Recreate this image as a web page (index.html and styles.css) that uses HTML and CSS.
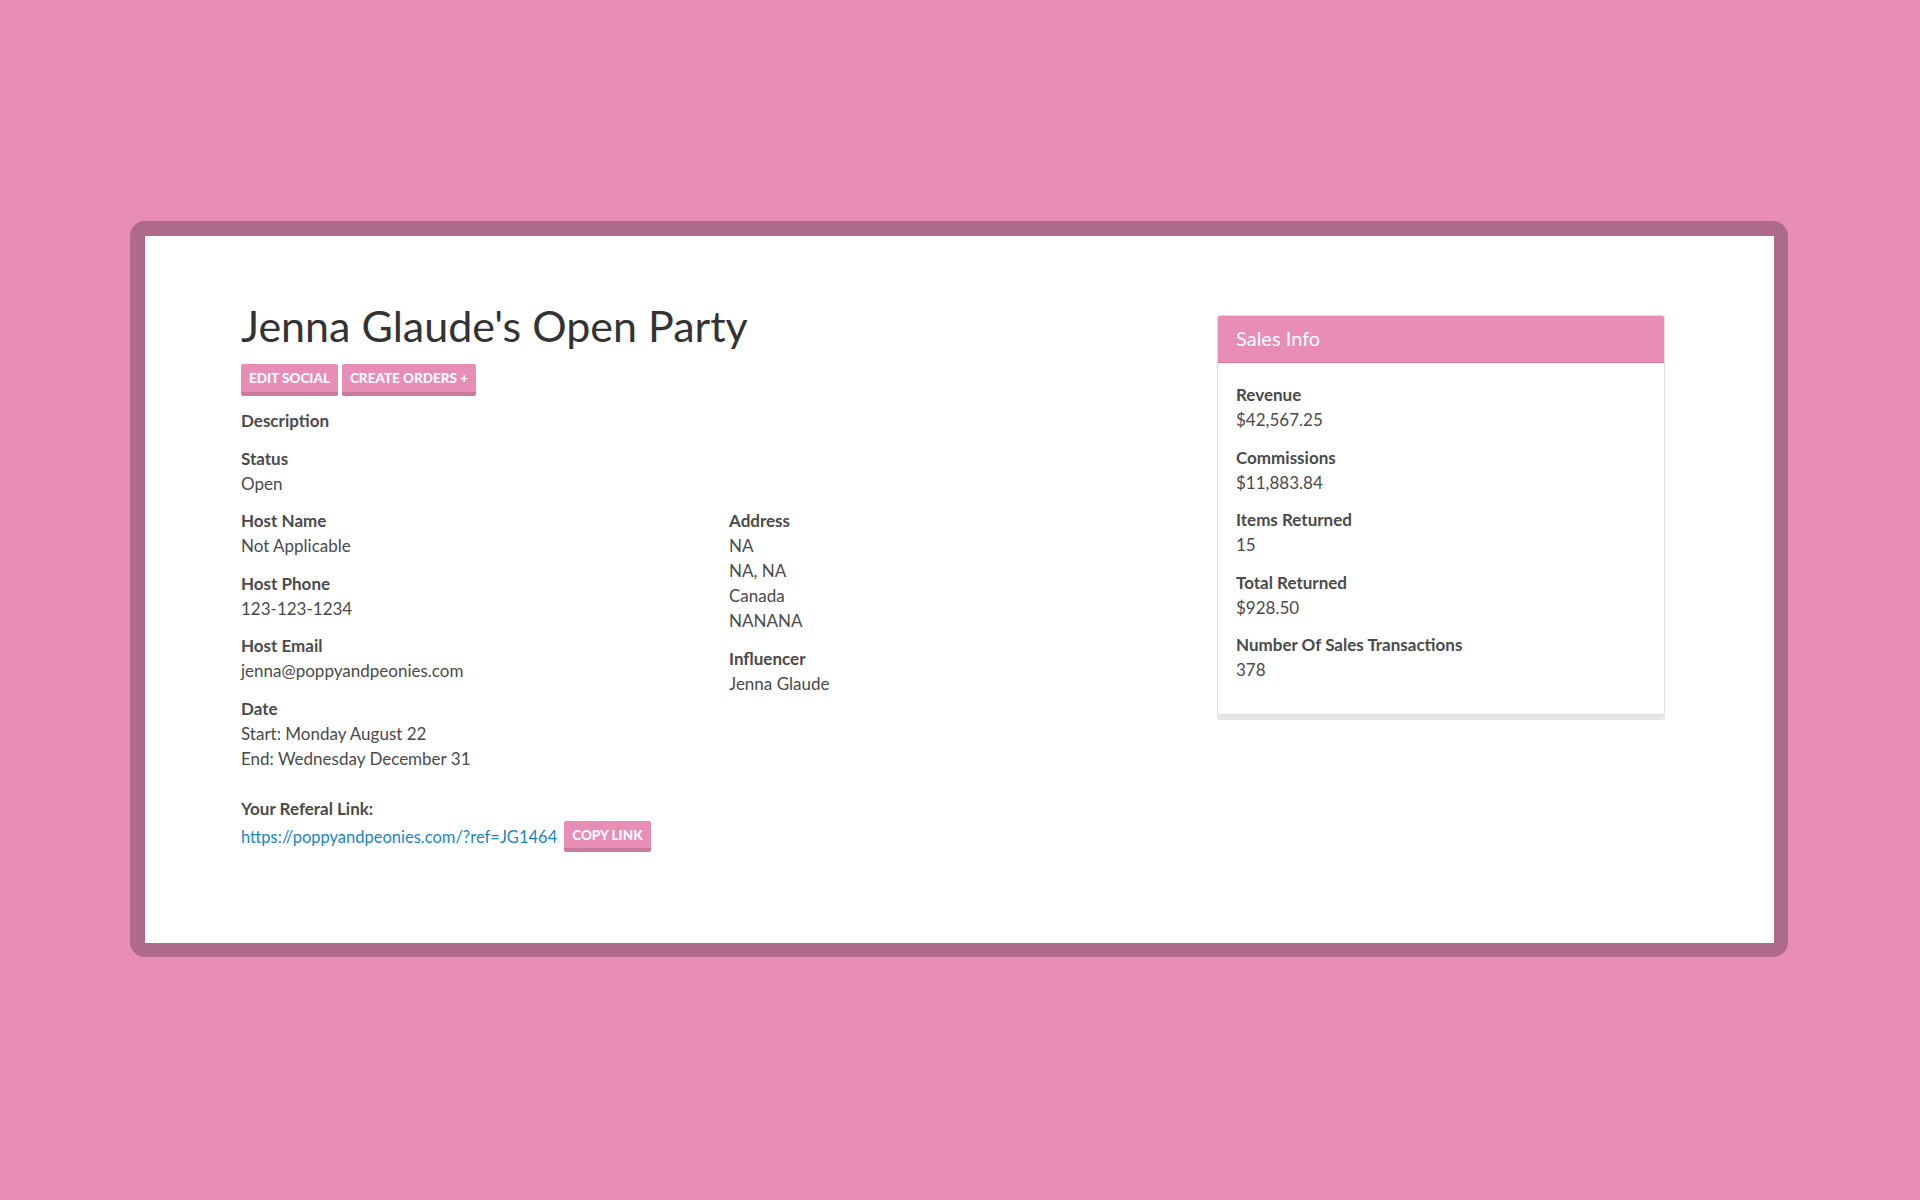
FILE: index.html
```html
<!DOCTYPE html>
<html>
<head>
<meta charset="utf-8">
<link rel="stylesheet" href="styles.css">
</head>
<body>
<div class="frame">
  <div class="sheet">
    <div class="main">
      <div class="left">
        <h1 class="title">Jenna Glaude's Open Party</h1>
        <div class="actions">
          <button class="btn">Edit Social</button>
          <button class="btn">Create Orders +</button>
        </div>
        <div class="field"><div class="label">Description</div></div>
        <div class="field"><div class="label">Status</div><div class="value">Open</div></div>
        <div class="cols">
          <div class="col">
            <div class="field"><div class="label">Host Name</div><div class="value">Not Applicable</div></div>
            <div class="field"><div class="label">Host Phone</div><div class="value">123-123-1234</div></div>
            <div class="field"><div class="label">Host Email</div><div class="value">jenna@poppyandpeonies.com</div></div>
            <div class="field"><div class="label">Date</div><div class="value">Start: Monday August 22</div><div class="value">End: Wednesday December 31</div></div>
          </div>
          <div class="col">
            <div class="field"><div class="label">Address</div><div class="value">NA</div><div class="value">NA, NA</div><div class="value">Canada</div><div class="value">NANANA</div></div>
            <div class="field"><div class="label">Influencer</div><div class="value">Jenna Glaude</div></div>
          </div>
        </div>
        <div class="referral">
          <div class="label">Your Referal Link:</div>
          <div class="ref-row">
            <a class="link" href="#">https://poppyandpeonies.com/?ref=JG1464</a>
            <button class="btn">Copy Link</button>
          </div>
        </div>
      </div>
      <div class="right">
        <div class="panel">
          <div class="panel-head">Sales Info</div>
          <div class="panel-body">
            <div class="field"><div class="label">Revenue</div><div class="value">$42,567.25</div></div>
            <div class="field"><div class="label">Commissions</div><div class="value">$11,883.84</div></div>
            <div class="field"><div class="label">Items Returned</div><div class="value">15</div></div>
            <div class="field"><div class="label">Total Returned</div><div class="value">$928.50</div></div>
            <div class="field"><div class="label">Number Of Sales Transactions</div><div class="value">378</div></div>
          </div>
        </div>
      </div>
    </div>
  </div>
</div>
</body>
</html>
```
FILE: styles.css
```css
html, body {
  margin: 0;
  padding: 0;
}
body {
  background: #e88db6;
  font-family: Lato, "Source Sans Pro", "Open Sans", sans-serif;
  color: #4a4a4a;
  width: 1920px;
  height: 1200px;
  padding-top: 221px;
  box-sizing: border-box;
}
.frame {
  margin-left: 130px;
  width: 1658px;
  height: 736px;
  box-sizing: border-box;
  background: #ad6a8a;
  border-radius: 15px;
  padding: 15px 14px 14px 15px;
}
.sheet {
  background: #fff;
  height: 100%;
  box-sizing: border-box;
  padding: 65px 0 0 96px;
}
.main {
  display: flex;
}
.left {
  width: 976px;
}
.right {
  width: 448px;
  padding-top: 14px;
}
.title {
  margin: 0;
  font-weight: 400;
  font-size: 43px;
  line-height: 50px;
  color: #333;
}
.actions {
  display: flex;
  gap: 4px;
  margin-top: 13px;
  margin-bottom: 12px;
}
.btn {
  font-family: inherit;
  background: #e88db5;
  color: #fff;
  border: 0;
  border-bottom: 4px solid #c97a9e;
  border-radius: 2px;
  font-weight: 900;
  font-size: 13.5px;
  text-transform: uppercase;
  height: 32px;
  padding: 0 8px;
  line-height: 28px;
  cursor: pointer;
}
.field {
  margin-bottom: 12.5px;
}
.label {
  font-weight: 700;
  font-size: 17px;
  line-height: 25px;
  color: #4a4a4a;
}
.value {
  font-size: 17px;
  line-height: 25px;
  color: #4a4a4a;
}
.cols {
  display: flex;
}
.col {
  width: 488px;
}
.referral {
  margin-top: 13px;
}
.ref-row {
  display: flex;
  align-items: center;
  gap: 7px;
  height: 31px;
}
.link {
  color: #1c86c2;
  text-decoration: none;
  font-size: 16.5px;
}
.ref-row .btn {
  height: 31px;
  padding: 0 8px;
}
.panel {
  border: 1px solid #dedede;
  border-radius: 3px;
  box-shadow: 0 5px 0 #e6e6e6;
  overflow: hidden;
}
.panel-head {
  background: #e88db5;
  color: #fff;
  font-size: 20px;
  height: 46px;
  line-height: 45px;
  padding: 0 18px;
  border-bottom: 1px solid #d97aa4;
}
.panel-body {
  padding: 19px 18px 19px;
}
```
